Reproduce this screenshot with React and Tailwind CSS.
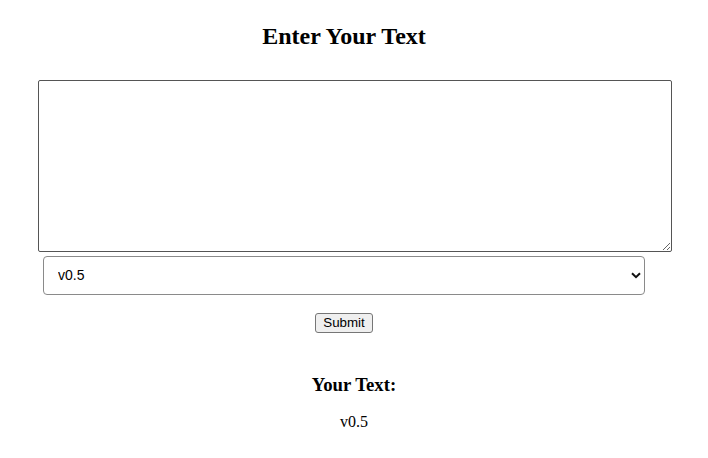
import React, { useState } from "react";

export default function App() {
    const [text, setText] = useState("");
    const [version, setVersion] = useState("v0.5");

    return (
        <div className="min-h-[458px] bg-white text-black font-['Liberation_Serif',serif]">
            <h1 className="w-[688px] pt-[20px] text-center text-[24px] font-bold leading-[32px]">
                Enter Your Text
            </h1>

            <div className="ml-[38px] mt-[28px] w-[634px]">
                <textarea
                    value={text}
                    onChange={(e) => setText(e.target.value)}
                    className="block h-[172px] w-[634px] rounded-[2px] border border-[#555] bg-white p-1 text-[13px] font-['Liberation_Mono',monospace] outline-none"
                />
            </div>

            <div className="relative ml-[43px] mt-[4px] w-[602px]">
                <select
                    value={version}
                    onChange={(e) => setVersion(e.target.value)}
                    className="block h-[39px] w-[602px] appearance-none rounded-[4px] border border-[#8a8a8a] bg-white pl-[14px] text-[14px] font-['Liberation_Sans',sans-serif] text-black outline-none"
                >
                    <option value="v0.5">v0.5</option>
                    <option value="v0.4">v0.4</option>
                    <option value="v0.3">v0.3</option>
                </select>
                <svg
                    className="pointer-events-none absolute right-[4px] top-[16px] h-[7px] w-[10px]"
                    viewBox="0 0 10 7"
                    fill="none"
                >
                    <path d="M1 1.2 L5 5.2 L9 1.2" stroke="#111" strokeWidth="2" />
                </svg>
            </div>

            <div className="mt-[18px] flex w-[688px] justify-center">
                <button
                    type="button"
                    className="h-[20px] w-[58px] rounded-[3px] border border-[#767676] bg-[#efefef] text-[13.33px] leading-[18px] font-['Liberation_Sans',sans-serif] text-black"
                >
                    Submit
                </button>
            </div>

            <h3 className="mt-[40px] text-center text-[18.72px] font-bold leading-[24px]">
                Your Text:
            </h3>
            <p className="mt-[13px] text-center text-[16px] leading-[24px]">{version}</p>
        </div>
    );
}
